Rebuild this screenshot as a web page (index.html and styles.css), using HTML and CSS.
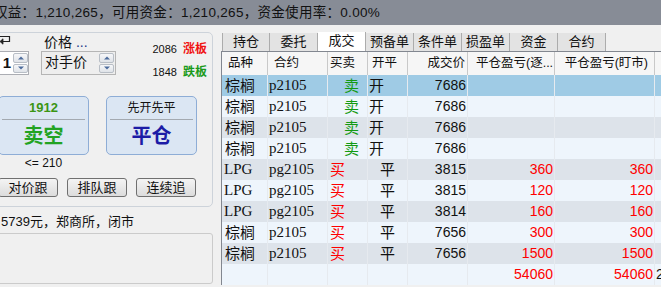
FILE: index.html
```html
<!DOCTYPE html>
<html lang="zh-CN">
  <head>
    <meta charset="UTF-8" />
    <title>交易下单</title>
    <link rel="stylesheet" href="styles.css">
  </head>
  <body>
    <div class="summary-bar">
      <span class="summary">权益：1,210,265，可用资金：1,210,265，资金使用率：0.00%</span>
    </div>

    <div class="workspace">
      <section class="order-side">
        <div class="order-panel">
          <div class="order-head">
            <div class="qty-col">
              <svg class="return-icon" viewBox="0 0 12 11" fill="none" stroke="#222" stroke-width="1.2">
                <path d="M0 1.5 H10.5 V6.5 H3.5" />
                <path d="M4 3.8 L1 6.5 L4 9.2 Z" fill="#222" stroke-width="0.8" />
              </svg>
              <div class="spin-field qty-field">
                <span class="qty-field__value">1</span>
                <span class="spinner">
                  <span class="spinner__btn spinner__btn--up"></span>
                  <span class="spinner__btn spinner__btn--down"></span>
                </span>
              </div>
            </div>
            <div class="price-col">
              <div class="price-col__label">价格 <span class="price-col__more">...</span></div>
              <div class="spin-field price-field">
                <span class="price-field__value">对手价</span>
                <span class="spinner">
                  <span class="spinner__btn spinner__btn--up"></span>
                  <span class="spinner__btn spinner__btn--down"></span>
                </span>
              </div>
            </div>
            <div class="limits">
              <div class="limit"><span>2086</span><span class="limit__tag limit__tag--up">涨板</span></div>
              <div class="limit"><span>1848</span><span class="limit__tag limit__tag--down">跌板</span></div>
            </div>
          </div>

          <div class="trade-row">
            <div class="trade-col">
              <button class="trade trade--sell">
                <span class="trade__top">1912</span>
                <span class="trade__label">卖空</span>
              </button>
              <div class="trade-col__hint">&lt;= 210</div>
            </div>
            <div class="trade-col">
              <button class="trade trade--close">
                <span class="trade__top">先开先平</span>
                <span class="trade__label">平仓</span>
              </button>
            </div>
          </div>

          <div class="chase-row">
            <button class="chase">对价跟</button>
            <button class="chase">排队跟</button>
            <button class="chase">连续追</button>
          </div>
        </div>

        <div class="status-line">5739元，郑商所，闭市</div>
        <div class="notes-box"></div>
      </section>

      <section class="records">
        <div class="tabs">
          <span class="tab">持仓</span>
          <span class="tab">委托</span>
          <span class="tab tab--active">成交</span>
          <span class="tab">预备单</span>
          <span class="tab">条件单</span>
          <span class="tab">损盈单</span>
          <span class="tab">资金</span>
          <span class="tab">合约</span>
        </div>

        <div class="grid">
          <div class="grid__row grid__row--head">
            <span class="cell head-variety">品种</span>
            <span class="cell head-contract">合约</span>
            <span class="cell head-side">买卖</span>
            <span class="cell head-offset">开平</span>
            <span class="cell head-num">成交价</span>
            <span class="cell head-pnl">平仓盈亏(逐...</span>
            <span class="cell head-num head-mark">平仓盈亏(盯市)</span>
            <span class="cell"></span>
          </div>

          <div class="grid__row grid__row--selected">
            <span class="cell variety">棕榈</span><span class="cell contract">p2105</span>
            <span class="cell side side--sell">卖</span><span class="cell offset offset--open">开</span>
            <span class="cell num">7686</span><span class="cell num"></span><span class="cell num"></span><span class="cell"></span>
          </div>
          <div class="grid__row grid__row--light">
            <span class="cell variety">棕榈</span><span class="cell contract">p2105</span>
            <span class="cell side side--sell">卖</span><span class="cell offset offset--open">开</span>
            <span class="cell num">7686</span><span class="cell num"></span><span class="cell num"></span><span class="cell"></span>
          </div>
          <div class="grid__row grid__row--dark">
            <span class="cell variety">棕榈</span><span class="cell contract">p2105</span>
            <span class="cell side side--sell">卖</span><span class="cell offset offset--open">开</span>
            <span class="cell num">7686</span><span class="cell num"></span><span class="cell num"></span><span class="cell"></span>
          </div>
          <div class="grid__row grid__row--light">
            <span class="cell variety">棕榈</span><span class="cell contract">p2105</span>
            <span class="cell side side--sell">卖</span><span class="cell offset offset--open">开</span>
            <span class="cell num">7686</span><span class="cell num"></span><span class="cell num"></span><span class="cell"></span>
          </div>
          <div class="grid__row grid__row--dark">
            <span class="cell variety variety--latin">LPG</span><span class="cell contract">pg2105</span>
            <span class="cell side side--buy">买</span><span class="cell offset offset--close">平</span>
            <span class="cell num">3815</span><span class="cell num loss">360</span><span class="cell num loss">360</span><span class="cell"></span>
          </div>
          <div class="grid__row grid__row--light">
            <span class="cell variety variety--latin">LPG</span><span class="cell contract">pg2105</span>
            <span class="cell side side--buy">买</span><span class="cell offset offset--close">平</span>
            <span class="cell num">3815</span><span class="cell num loss">120</span><span class="cell num loss">120</span><span class="cell"></span>
          </div>
          <div class="grid__row grid__row--dark">
            <span class="cell variety variety--latin">LPG</span><span class="cell contract">pg2105</span>
            <span class="cell side side--buy">买</span><span class="cell offset offset--close">平</span>
            <span class="cell num">3814</span><span class="cell num loss">160</span><span class="cell num loss">160</span><span class="cell"></span>
          </div>
          <div class="grid__row grid__row--light">
            <span class="cell variety">棕榈</span><span class="cell contract">p2105</span>
            <span class="cell side side--buy">买</span><span class="cell offset offset--close">平</span>
            <span class="cell num">7656</span><span class="cell num loss">300</span><span class="cell num loss">300</span><span class="cell"></span>
          </div>
          <div class="grid__row grid__row--dark">
            <span class="cell variety">棕榈</span><span class="cell contract">p2105</span>
            <span class="cell side side--buy">买</span><span class="cell offset offset--close">平</span>
            <span class="cell num">7656</span><span class="cell num loss">1500</span><span class="cell num loss">1500</span><span class="cell"></span>
          </div>
          <div class="grid__row grid__row--light">
            <span class="cell"></span><span class="cell"></span><span class="cell"></span><span class="cell"></span>
            <span class="cell"></span><span class="cell num loss">54060</span><span class="cell num loss">54060</span><span class="cell extra">2</span>
          </div>
        </div>
      </section>
    </div>
  </body>
</html>
```

FILE: styles.css
```css
* {
  margin: 0;
  padding: 0;
  box-sizing: border-box;
}
body {
  width: 661px;
  height: 287px;
  overflow: hidden;
  background-color: #f0f0f0;
  font-family: "Liberation Sans", "Noto Sans CJK SC", sans-serif;
  font-size: 13px;
  color: #111;
}
button {
  font-family: inherit;
  color: inherit;
  cursor: pointer;
}

/* account summary */
.summary-bar {
  height: 25px;
  line-height: 25px;
  background-color: #878c96;
  white-space: nowrap;
  overflow: hidden;
  font-size: 13.5px;
}
.summary {
  display: inline-block;
  margin-left: -6px;
  letter-spacing: 0.3px;
}

.workspace {
  display: flex;
  gap: 8px;
  padding-top: 7px;
}

/* order panel */
.order-side {
  flex: 0 0 225px;
  margin-left: -12px;
}
.order-panel {
  height: 175px;
  border: 1px solid #cdd3da;
  border-radius: 0 5px 5px 0;
  padding: 0 5px 0 9px;
}
.order-head {
  display: flex;
  height: 42px;
}
.qty-col {
  width: 31px;
  display: flex;
  flex-direction: column;
  justify-content: space-between;
}
.return-icon {
  width: 12px;
  height: 11px;
  margin: 2px 0 0 1px;
}
.spin-field {
  display: flex;
  height: 24px;
  border: 1px solid #abadb3;
}
.qty-field {
  background-color: #fff;
}
.qty-field__value {
  flex: 1;
  text-align: right;
  padding-right: 2px;
  font-size: 15px;
  font-weight: bold;
  line-height: 22px;
}
.spinner {
  display: flex;
  flex-direction: column;
  width: 15px;
  padding: 1px 0;
  gap: 1px;
}
.spinner__btn {
  flex: 1;
  position: relative;
  border: 1px solid #b8bec6;
  border-radius: 2px;
  background: linear-gradient(#f6f7f9, #dfe3e8);
}
.spinner__btn::after {
  content: "";
  position: absolute;
  left: 50%;
  top: 50%;
  transform: translate(-50%, -50%);
  border-left: 3px solid transparent;
  border-right: 3px solid transparent;
}
.spinner__btn--up::after {
  border-bottom: 3px solid #4d6c9c;
}
.spinner__btn--down::after {
  border-top: 3px solid #4d6c9c;
}
.price-col {
  width: 75px;
  margin-left: 12px;
}
.price-col__label {
  height: 18px;
  line-height: 18px;
  padding-left: 3px;
  font-size: 14px;
}
.price-col__more {
  color: #1d3a8c;
}
.price-field {
  background-color: #eeeeee;
  border-color: #b5b5b5;
  padding-left: 3px;
  padding-right: 1px;
}
.price-field__value {
  flex: 1;
  font-size: 14px;
  line-height: 20px;
}
.limits {
  margin-left: auto;
  padding-top: 8px;
  display: flex;
  flex-direction: column;
  gap: 7px;
}
.limit {
  display: flex;
  gap: 6px;
  line-height: 16px;
  font-size: 11px;
}
.limit__tag {
  font-size: 12px;
  font-weight: bold;
}
.limit__tag--up {
  color: #f01010;
}
.limit__tag--down {
  color: #1a9a1a;
}

.trade-row {
  display: flex;
  gap: 17px;
  margin-top: 21px;
}
.trade-col {
  width: 91px;
}
.trade {
  width: 91px;
  height: 59px;
  display: flex;
  flex-direction: column;
  border: 1px solid #8eadd6;
  border-radius: 5px;
  background-color: #dbe6f3;
}
.trade__top {
  height: 23px;
  line-height: 22px;
  margin: 0 3px;
  border-bottom: 1px solid #a3a9b0;
  font-size: 12px;
}
.trade__label {
  flex: 1;
  line-height: 33px;
  font-size: 20px;
  font-weight: bold;
}
.trade--sell .trade__top {
  color: #3b9514;
  font-size: 13px;
  font-weight: bold;
}
.trade--sell .trade__label {
  color: #22a322;
}
.trade--close .trade__label {
  color: #1c1ca6;
}
.trade-col__hint {
  text-align: center;
  line-height: 16px;
  font-size: 12px;
}

.chase-row {
  display: flex;
  gap: 9px;
  margin-top: 7px;
}
.chase {
  width: 60px;
  height: 19px;
  border: 1px solid #707070;
  border-radius: 3px;
  background: linear-gradient(#f4f4f4, #dcdcdc);
  font-size: 13px;
  line-height: 17px;
}

.status-line {
  height: 26px;
  line-height: 23px;
  padding-top: 3px;
  padding-left: 13px;
  font-size: 13px;
}
.notes-box {
  height: 51px;
  border: 1px solid #cbcbcb;
  border-radius: 0 3px 3px 0;
}

/* records */
.records {
  flex: 1;
  min-width: 0;
  overflow: hidden;
}
.tabs {
  display: flex;
  height: 19px;
  padding-left: 1px;
}
.tab {
  width: 48px;
  margin-top: 1px;
  border-right: 1px solid #acacac;
  background-color: #e3e3e3;
  text-align: center;
  line-height: 18px;
  font-size: 13px;
}
.tab:first-child {
  border-left: 1px solid #acacac;
}
.tab--active {
  margin-top: 0;
  background-color: #fff;
}
.grid {
  border-top: 1px solid #828790;
  border-left: 1px solid #828790;
}
.grid__row {
  display: grid;
  grid-template-columns: 46px 60px 40px 40px 60px 87px 100px 60px;
  height: 21px;
  line-height: 21px;
  font-size: 15px;
}
.grid__row--head {
  height: 23px;
  line-height: 23px;
  font-size: 12.5px;
  background-color: #f6f6f6;
}
.grid__row--head .cell {
  border-right-color: #c9c9c9;
}
.grid__row--selected {
  background-color: #9fcbe5;
}
.grid__row--light {
  background-color: #eef5fc;
}
.grid__row--dark {
  background-color: #dde3ea;
}
.cell {
  border-right: 1px solid #e6eaef;
  overflow: hidden;
  white-space: nowrap;
}
.head-variety,
.head-contract {
  padding-left: 6px;
}
.head-side {
  padding-left: 2px;
}
.head-offset {
  padding-left: 4px;
}
.head-num {
  text-align: right;
  padding-right: 2px;
}
.head-pnl {
  padding-left: 8px;
}
.head-mark {
  padding-right: 6px;
}
.variety {
  padding-left: 3px;
}
.variety--latin,
.contract {
  font-family: "Liberation Serif", "Noto Sans CJK SC", serif;
}
.variety--latin {
  padding-left: 2px;
}
.contract {
  padding-left: 1px;
}
.side--sell {
  color: #129a12;
  text-align: right;
  padding-right: 8px;
}
.side--buy {
  color: #f00;
  padding-left: 2px;
}
.offset--open {
  padding-left: 1px;
}
.offset--close {
  text-align: center;
}
.num {
  text-align: right;
  padding-right: 1px;
  font-size: 14px;
}
.loss {
  color: #f00;
}
.extra {
  padding-left: 1px;
  font-size: 14px;
}
```
